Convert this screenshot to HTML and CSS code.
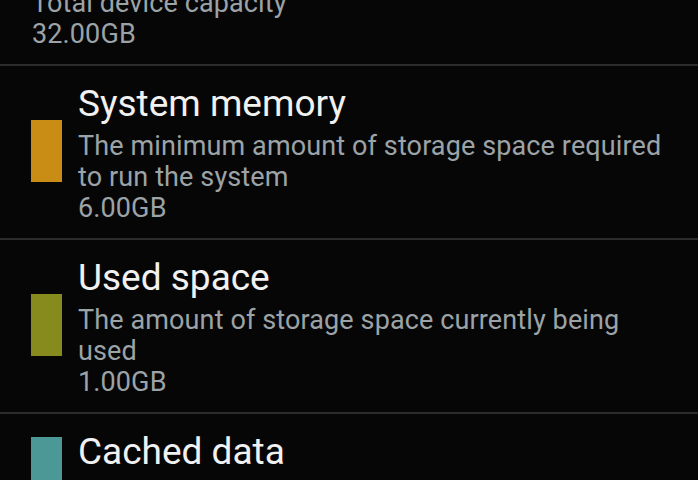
FILE: index.html
```html
<!DOCTYPE html>
<html lang="en">
<head>
<meta charset="utf-8">
<title>Storage</title>
<link rel="stylesheet" href="styles.css">
</head>
<body>
<div class="list">
  <div class="row row-plain">
    <div class="text">
      <div class="title">Total space</div>
      <div class="desc">Total device capacity</div>
      <div class="desc">32.00GB</div>
    </div>
  </div>
  <div class="row">
    <div class="swatch swatch-system"></div>
    <div class="text">
      <div class="title">System memory</div>
      <div class="desc">The minimum amount of storage space required to run the system</div>
      <div class="desc">6.00GB</div>
    </div>
  </div>
  <div class="row">
    <div class="swatch swatch-used"></div>
    <div class="text">
      <div class="title">Used space</div>
      <div class="desc">The amount of storage space currently being used</div>
      <div class="desc">1.00GB</div>
    </div>
  </div>
  <div class="row">
    <div class="swatch swatch-cached"></div>
    <div class="text">
      <div class="title">Cached data</div>
      <div class="desc">0.12GB</div>
    </div>
  </div>
</div>
</body>
</html>
```

FILE: styles.css
```css
html, body {
  margin: 0;
  padding: 0;
  background: #060606;
  overflow: hidden;
}
body {
  font-family: Roboto, "Liberation Sans", sans-serif;
  width: 698px;
  height: 480px;
}
.list {
  margin-top: -77px;
}
.row {
  display: flex;
  align-items: center;
  padding: 11px 28px 14px 31px;
  border-bottom: 2px solid #2b2b2b;
}
.row-plain {
  padding-left: 32px;
}
.swatch {
  flex: none;
  width: 31px;
  height: 62px;
  margin-right: 16px;
}
.swatch-system { background: #c98d16; }
.swatch-used { background: #878a1c; }
.swatch-cached { background: #4b9896; }
.text {
  flex: 1;
  min-width: 0;
}
.title {
  font-size: 37px;
  line-height: 54px;
  color: #f1f1f1;
}
.desc {
  font-size: 27px;
  line-height: 31px;
  letter-spacing: 0.12px;
  color: #9ca3a6;
}
```
